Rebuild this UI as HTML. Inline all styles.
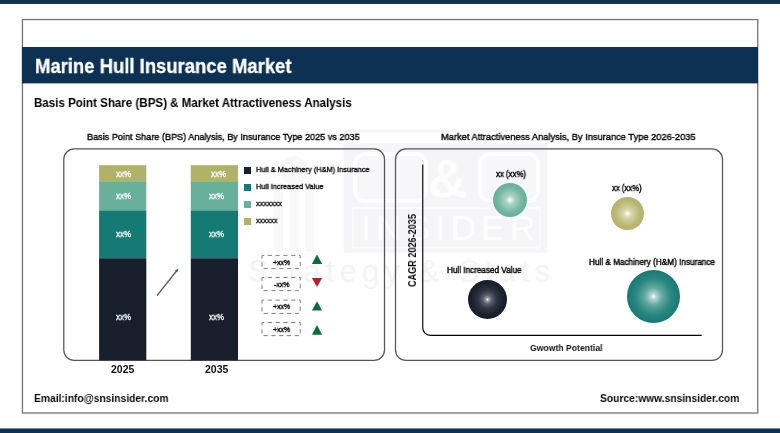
<!DOCTYPE html>
<html><head><meta charset="utf-8">
<style>
html,body{margin:0;padding:0;}
body{width:780px;height:433px;position:relative;overflow:hidden;background:#fff;font-family:"Liberation Sans",sans-serif;color:#111;}
.abs{position:absolute;}
.t{will-change:transform;position:absolute;white-space:nowrap;transform-origin:0 50%;line-height:1;}
.lg{position:absolute;width:7.1px;height:6.8px;}
.bl{font-size:8.6px;color:#fff;-webkit-text-stroke:0.3px #fff;transform:scaleX(0.93);}
.yr{font-size:10.5px;font-weight:bold;}
.lt{font-size:8px;color:#000;-webkit-text-stroke:0.32px #000;}
.dt{font-size:8px;color:#000;-webkit-text-stroke:0.4px #000;transform:scaleX(0.86);}
.bt{font-size:8.3px;color:#000;-webkit-text-stroke:0.4px #000;}
.bub{position:absolute;border-radius:50%;}
</style></head><body>
<!-- watermark -->
<svg class="abs" style="left:0;top:0;" width="780" height="433" font-family="Liberation Sans, sans-serif">
<rect x="343.5" y="129.5" width="204" height="123.2" fill="#f5f5f8"/>
<rect x="60" y="132.7" width="680" height="10.6" fill="#fff"/>
<rect x="355" y="154" width="71" height="47" rx="10" fill="#f7f7fa" stroke="#fdfdfe" stroke-width="4"/>
<rect x="480" y="154" width="58" height="47" rx="10" fill="#f7f7fa" stroke="#fdfdfe" stroke-width="4"/>
<text x="447.5" y="197" font-size="54" font-weight="bold" fill="#fdfdfe" text-anchor="middle">&amp;</text>
<rect x="353" y="208" width="187" height="40" fill="none" stroke="#fbfbfd" stroke-width="1.5"/>
<text x="361" y="239.5" font-size="35" fill="#fdfdfe" textLength="174" lengthAdjust="spacing">INSIDER</text>
<text x="248" y="282" font-size="31" fill="#f4f4f7" textLength="302" lengthAdjust="spacing">Strategy &amp; Stats</text>
<g fill="#f8f8fa">
<circle cx="294" cy="170" r="14"/>
<rect x="274" y="183" width="9" height="68"/>
<rect x="289.5" y="183" width="9" height="68"/>
<rect x="305" y="183" width="9" height="68"/>
</g>
</svg>
<svg class="abs" style="left:0;top:0;" width="780" height="433"><rect x="22.45" y="19.55" width="735.3" height="393.45" fill="none" stroke="#757575" stroke-width="1.3"/></svg>
<svg class="abs" style="left:0;top:0;" width="780" height="433"><rect x="21.95" y="47" width="736.05" height="36.4" fill="#0d3152"/><rect x="0" y="428.45" width="780" height="5" fill="#0d3152"/><rect x="0" y="0" width="780" height="3.95" fill="#0d3152"/></svg>

<div class="t" id="title" style="left:34.5px;top:55.7px;font-size:20px;font-weight:bold;color:#fff;-webkit-text-stroke:0.3px #fff;transform:scaleX(0.9231);">Marine Hull Insurance Market</div>
<div class="t" id="head" style="left:34.2px;top:96.8px;font-size:12.2px;font-weight:bold;color:#000;transform:scaleX(0.9482);-webkit-text-stroke:0;">Basis Point Share (BPS) &amp; Market Attractiveness Analysis</div>
<div class="t" id="sub1" style="left:87px;top:132px;font-size:9.7px;color:#000;-webkit-text-stroke:0.38px #000;transform:scaleX(0.9397);">Basis Point Share (BPS) Analysis, By Insurance Type 2025 vs 2035</div>
<div class="t" id="sub2" style="left:440.5px;top:132px;font-size:9.7px;color:#000;-webkit-text-stroke:0.38px #000;transform:scaleX(0.9593);">Market Attractiveness Analysis, By Insurance Type 2026-2035</div>

<!-- left panel -->
<svg class="abs" style="left:0;top:0;" width="780" height="433"><rect x="63.8" y="148.9" width="320.7" height="211.5" rx="10.5" fill="none" stroke="#555" stroke-width="1.25"/><rect x="395.5" y="148.9" width="327" height="211.5" rx="10.5" fill="none" stroke="#555" stroke-width="1.25"/></svg>
<!-- right panel -->


<!-- bars -->
<svg class="abs" style="left:0;top:0;" width="780" height="433"><rect x="99.1" y="165.15" width="47.2" height="17" fill="#b1b26a"/><rect x="99.1" y="182" width="47.2" height="29" fill="#69b09a"/><rect x="99.1" y="210.8" width="47.2" height="47.7" fill="#157a74"/><rect x="99.1" y="258.3" width="47.2" height="102" fill="#181f2c"/><rect x="190.8" y="165.15" width="47.2" height="17" fill="#b1b26a"/><rect x="190.8" y="182" width="47.2" height="29" fill="#69b09a"/><rect x="190.8" y="210.8" width="47.2" height="47.7" fill="#157a74"/><rect x="190.8" y="258.3" width="47.2" height="102" fill="#181f2c"/></svg>
<!-- bar labels -->
<div class="t bl" style="left:116px;top:169.6px;">xx%</div>
<div class="t bl" style="left:116px;top:191.6px;">xx%</div>
<div class="t bl" style="left:116px;top:229.6px;">xx%</div>
<div class="t bl" style="left:116px;top:312.6px;">xx%</div>
<div class="t bl" style="left:211px;top:169.6px;">xx%</div>
<div class="t bl" style="left:209px;top:191.6px;">xx%</div>
<div class="t bl" style="left:209px;top:229.6px;">xx%</div>
<div class="t bl" style="left:209px;top:312.6px;">xx%</div>

<div class="t yr" style="left:111px;top:364.3px;">2025</div>
<div class="t yr" style="left:205px;top:364.3px;">2035</div>

<!-- arrow -->
<svg class="abs" style="left:150px;top:262px;" width="36" height="40" viewBox="150 262 36 40">
<line x1="157" y1="295.6" x2="176.6" y2="270.8" stroke="#505050" stroke-width="1.3"/>
<polygon points="178.3,268.7 177.5,272.3 174.9,270.3" fill="#505050"/>
</svg>

<!-- legend -->
<div class="lg" style="left:244.1px;top:167px;background:#18202c;"></div>
<div class="lg" style="left:244.1px;top:184px;background:#147a74;"></div>
<div class="lg" style="left:244.1px;top:201px;background:#69b19a;"></div>
<div class="lg" style="left:244.1px;top:218px;background:#b4b26a;"></div>
<div class="t lt" id="lt1" style="left:256px;top:166.4px;transform:scaleX(0.9216);">Hull &amp; Machinery (H&amp;M) Insurance</div>
<div class="t lt" id="lt2" style="left:256px;top:183.4px;transform:scaleX(0.9217);">Hull Increased Value</div>
<div class="t lt" id="lt3" style="left:256px;top:200.4px;transform:scaleX(0.9286);">xxxxxxx</div>
<div class="t lt" id="lt4" style="left:256px;top:217.4px;transform:scaleX(0.8958);">xxxxxx</div>

<!-- delta boxes -->
<svg class="abs" style="left:0;top:0;" width="780" height="433"><rect x="262" y="255.4" width="38.2" height="13.2" fill="none" stroke="#7b8491" stroke-width="1" stroke-dasharray="4.2 3.6" stroke-dashoffset="2"/><rect x="262" y="277.5" width="38.2" height="13.2" fill="none" stroke="#7b8491" stroke-width="1" stroke-dasharray="4.2 3.6" stroke-dashoffset="2"/><rect x="262" y="300.1" width="38.2" height="13.3" fill="none" stroke="#7b8491" stroke-width="1" stroke-dasharray="4.2 3.6" stroke-dashoffset="2"/><rect x="262" y="322.5" width="38.2" height="13.1" fill="none" stroke="#7b8491" stroke-width="1" stroke-dasharray="4.2 3.6" stroke-dashoffset="2"/></svg>
<div class="t dt" style="left:272.9px;top:259px;">+xx%</div>
<div class="t dt" style="left:274.2px;top:280.9px;">-xx%</div>
<div class="t dt" style="left:272.9px;top:303px;">+xx%</div>
<div class="t dt" style="left:272.9px;top:325.5px;">+xx%</div>
<svg class="abs" style="left:308px;top:250px;" width="20" height="90" viewBox="308 250 20 90">
<polygon points="311.9,263.9 322.1,263.9 317,254.6" fill="#0c6b3b"/>
<polygon points="311.9,277.9 322.1,277.9 317,287.1" fill="#b81f2e"/>
<polygon points="311.9,310.6 322.1,310.6 317,301.3" fill="#0c6b3b"/>
<polygon points="311.9,334.7 322.1,334.7 317,325.1" fill="#0c6b3b"/>
</svg>

<!-- right chart axes -->
<svg class="abs" style="left:415px;top:160px;" width="295" height="180" viewBox="415 160 295 180">
<path d="M422.75 164.6 V327.85 A7.5 7.5 0 0 0 430.25 335.35 H701.7" fill="none" stroke="#000" stroke-width="1.15"/>
</svg>

<!-- bubbles -->
<div class="bub" style="left:493px;top:183px;width:34px;height:34px;background:radial-gradient(circle at 50% 50%,#ffffff 0%,#a9d3c5 18%,#6fb49e 55%,#62ab93 100%);"></div>
<div class="bub" style="left:610.5px;top:196.7px;width:33.4px;height:33.4px;background:radial-gradient(circle at 50% 50%,#ffffff 0%,#d6d5a8 18%,#b8b670 55%,#adab62 100%);"></div>
<div class="bub" style="left:467.9px;top:280.3px;width:39px;height:39px;background:radial-gradient(circle at 50% 50%,#ffffff 0%,#a4a7af 5%,#5b5f6d 16%,#2f3443 34%,#1b202e 58%,#151a27 100%);"></div>
<div class="bub" style="left:626.5px;top:270.1px;width:53px;height:53px;background:radial-gradient(circle at 50% 50%,#ffffff 0%,#b4d7d3 7%,#62a6a0 24%,#2a8781 48%,#147670 75%,#10716b 100%);"></div>

<div class="t bt" id="b1" style="left:496px;top:169.5px;transform:scaleX(0.9430);">xx (xx%)</div>
<div class="t bt" id="b2" style="left:611.5px;top:183.5px;transform:scaleX(0.9336);">xx (xx%)</div>
<div class="t bt" id="b3" style="left:447px;top:265.5px;transform:scaleX(0.9809);">Hull Increased Value</div>
<div class="t bt" id="b4" style="left:588.5px;top:257.5px;transform:scaleX(0.9865);">Hull &amp; Machinery (H&amp;M) Insurance</div>

<div class="t" id="xl" style="left:529.6px;top:343.4px;font-size:9.7px;font-weight:bold;transform:scaleX(0.8925);">Gwowth Potential</div>
<div class="t" id="yl" style="left:407.7px;top:286.6px;font-size:10.4px;font-weight:bold;transform-origin:0 0;transform:rotate(-90deg) scaleX(0.877);">CAGR 2026-2035</div>

<div class="t" id="em" style="left:34.3px;top:393.2px;font-size:11.2px;font-weight:bold;transform:scaleX(0.9187);-webkit-text-stroke:0;color:#0a0a0a;">Email:info@snsinsider.com</div>
<div class="t" id="src" style="left:599.6px;top:393.2px;font-size:11.2px;font-weight:bold;transform:scaleX(0.9173);-webkit-text-stroke:0;color:#0a0a0a;">Source:www.snsinsider.com</div>
</body></html>
